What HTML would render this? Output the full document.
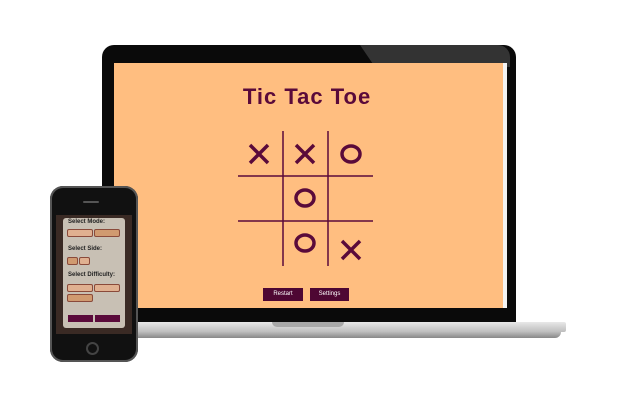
<!DOCTYPE html><html><head><style>
body{margin:0;width:622px;height:406px;background:#fff;position:relative;overflow:hidden;font-family:"Liberation Sans",sans-serif}
.a{position:absolute}
.m{color:#5a0a3a;font-weight:bold}
</style></head><body>
<!-- laptop -->
<div class="a" style="left:102px;top:45px;width:414px;height:280px;background:#0a0a0a;border-radius:12px 12px 0 0"></div>
<div class="a" style="left:360px;top:45px;width:150px;height:22px;background:#333;border-radius:0 12px 0 0;clip-path:polygon(0 0,100% 0,100% 100%,10% 100%)"></div>
<div class="a" style="left:114px;top:63px;width:389px;height:245px;background:#ffbe80"></div>
<div class="a" style="left:503px;top:63px;width:4px;height:245px;background:#f4f4f4"></div>
<div class="a" style="left:90px;top:322px;width:476px;height:10px;background:linear-gradient(#e8e8e8,#bdbdbd);border-radius:2px"></div>
<div class="a" style="left:95px;top:332px;width:466px;height:6px;background:linear-gradient(#bbb,#888);border-radius:0 0 40px 40px"></div>
<div class="a" style="left:272px;top:322px;width:72px;height:5px;background:#a8a8a8;border-radius:0 0 6px 6px"></div>
<div class="a m" style="left:207px;top:84px;width:200px;text-align:center;font-size:22px;letter-spacing:1px">Tic Tac Toe</div>
<svg class="a" style="left:0;top:0" width="622" height="406">
<g stroke="#5a0a3a" stroke-width="1.5"><line x1="283" y1="131" x2="283" y2="266"/><line x1="328" y1="131" x2="328" y2="266"/><line x1="238" y1="176" x2="373" y2="176"/><line x1="238" y1="221" x2="373" y2="221"/></g>
<g stroke="#5a0a3a" stroke-width="3.5" fill="none">
<path d="M250 145L268 163M268 145L250 163"/><path d="M296 145L314 163M314 145L296 163"/><path d="M342 241L360 259M360 241L342 259"/>
<ellipse cx="351" cy="154" rx="9" ry="8"/><ellipse cx="305" cy="198" rx="9" ry="8"/><ellipse cx="305" cy="243" rx="9" ry="8"/></g>
</svg>
<div class="a" style="left:263px;top:288px;width:40px;height:13px;background:#4e0733;color:#fff;font-size:6px;text-align:center;line-height:13px">Restart</div>
<div class="a" style="left:310px;top:288px;width:39px;height:13px;background:#4e0733;color:#fff;font-size:6px;text-align:center;line-height:13px">Settings</div>
<!-- phone -->
<div class="a" style="left:50px;top:186px;width:88px;height:176px;background:#111;border-radius:13px;box-shadow:inset 0 0 0 2px #555"></div>
<div class="a" style="left:83px;top:201px;width:16px;height:2px;background:#555;border-radius:1px"></div>
<div class="a" style="left:86px;top:342px;width:13px;height:13px;border:2px solid #444;border-radius:50%;box-sizing:border-box"></div>
<div class="a" style="left:56px;top:215px;width:76px;height:119px;background:#3a2a24"></div>
<div class="a" style="left:63px;top:218px;width:62px;height:110px;background:#c8c0b4;border-radius:3px"></div>
<div class="a" style="left:68px;top:219px;font-size:6px;font-weight:bold;color:#222">Select Mode:</div>
<div class="a" style="left:67px;top:229px;width:24px;height:6px;background:#e0b090;border:1px solid #8a4a3a;border-radius:2px"></div>
<div class="a" style="left:94px;top:229px;width:24px;height:6px;background:#d09a70;border:1px solid #8a4a3a;border-radius:2px"></div>
<div class="a" style="left:68px;top:246px;font-size:6px;font-weight:bold;color:#222">Select Side:</div>
<div class="a" style="left:67px;top:257px;width:9px;height:6px;background:#d09a70;border:1px solid #8a4a3a;border-radius:2px"></div>
<div class="a" style="left:79px;top:257px;width:9px;height:6px;background:#e0b090;border:1px solid #8a4a3a;border-radius:2px"></div>
<div class="a" style="left:68px;top:272px;font-size:6px;font-weight:bold;color:#222">Select Difficulty:</div>
<div class="a" style="left:67px;top:284px;width:24px;height:6px;background:#e0b090;border:1px solid #8a4a3a;border-radius:2px"></div>
<div class="a" style="left:94px;top:284px;width:24px;height:6px;background:#e0b090;border:1px solid #8a4a3a;border-radius:2px"></div>
<div class="a" style="left:67px;top:294px;width:24px;height:6px;background:#d09a70;border:1px solid #8a4a3a;border-radius:2px"></div>
<div class="a" style="left:68px;top:315px;width:25px;height:7px;background:#5a0a3a"></div>
<div class="a" style="left:95px;top:315px;width:25px;height:7px;background:#5a0a3a"></div>
</body></html>
